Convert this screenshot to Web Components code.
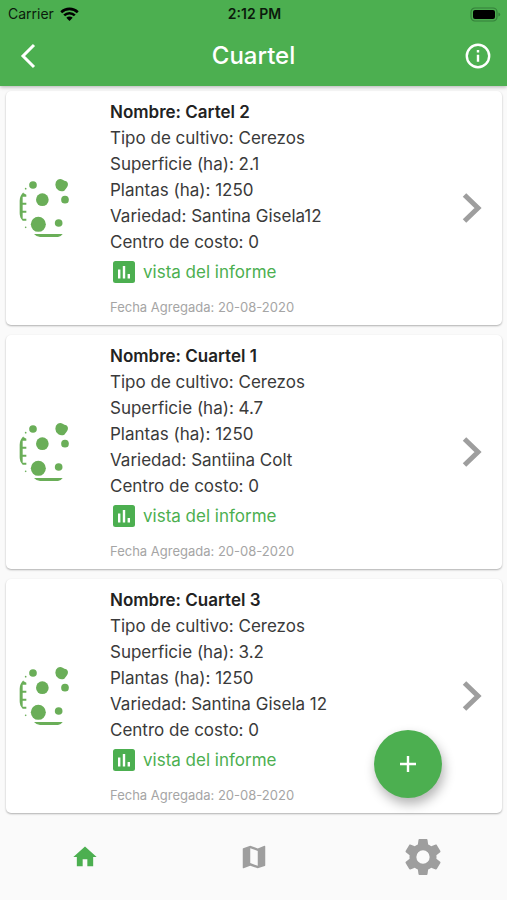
<!DOCTYPE html>
<html lang="es">
<head>
<meta charset="utf-8">
<meta name="viewport" content="width=device-width, initial-scale=1">
<title>Cuartel</title>
<style>
    body {
        margin: 0;
        background: #fafafa;
        font-family: Inter, "Liberation Sans", sans-serif;
    }
</style>
</head>
<body>
<cuartel-app></cuartel-app>

<script>
class StatusBar extends HTMLElement {
    constructor() {
        super();
        this.attachShadow({ mode: "open" });
        this.shadowRoot.innerHTML = `
            <style>
                :host {
                    display: grid;
                    grid-template-columns: 1fr auto 1fr;
                    align-items: center;
                    height: 28px;
                    padding: 0 6px 0 8px;
                    font-size: 14px;
                    line-height: 20px;
                    color: #0b1a0c;
                }
                .carrier {
                    display: flex;
                    align-items: center;
                    gap: 6px;
                }
                .time { font-weight: 600; }
                .battery { justify-self: end; }
                svg { display: block; }
            </style>
            <div class="carrier">
                <span>Carrier</span>
                <svg width="19" height="14" viewBox="0 0 19 14" fill="none" stroke="#000" stroke-width="2.6" aria-hidden="true">
                    <path d="M1.2 5.2a12 12 0 0 1 16.6 0"/>
                    <path d="M4.2 8.4a7.6 7.6 0 0 1 10.6 0"/>
                    <path d="M9.5 14 6.3 10.7a4.6 4.6 0 0 1 6.4 0z" fill="#000" stroke="none"/>
                </svg>
            </div>
            <span class="time">2:12 PM</span>
            <svg class="battery" width="31" height="15" viewBox="0 0 31 15" aria-hidden="true">
                <rect x="1" y="1" width="26" height="13" rx="4" fill="none" stroke="#34803a" stroke-width="1.2"/>
                <rect x="3" y="3" width="22" height="9" rx="2" fill="#000"/>
                <path d="M28.4 5.4q1.8.6 1.8 2.1t-1.8 2.1z" fill="#34803a"/>
            </svg>
        `;
    }
}

class AppBar extends HTMLElement {
    constructor() {
        super();
        this.attachShadow({ mode: "open" });
        this.shadowRoot.innerHTML = `
            <style>
                :host {
                    display: block;
                    position: relative;
                    z-index: 1;
                    background: #4caf50;
                    box-shadow: 0 1px 4px rgba(0,0,0,0.3);
                }
                .bar {
                    display: flex;
                    align-items: center;
                    justify-content: space-between;
                    height: 58px;
                    padding: 0 8px 2px;
                    box-sizing: border-box;
                    color: #fff;
                }
                h1 {
                    margin: 0;
                    font-size: 24px;
                    line-height: 32px;
                    font-weight: 500;
                }
                button {
                    display: grid;
                    place-items: center;
                    width: 43px;
                    height: 44px;
                    padding: 0;
                    border: 0;
                    background: none;
                    color: inherit;
                }
            </style>
            <status-bar></status-bar>
            <div class="bar">
                <button type="button" aria-label="Volver">
                    <svg width="20" height="26" viewBox="0 0 20 26" fill="none" stroke="currentColor" stroke-width="3" aria-hidden="true">
                        <path d="M14 2 3 13l11 11"/>
                    </svg>
                </button>
                <h1><slot></slot></h1>
                <button type="button" aria-label="Información">
                    <svg width="26" height="26" viewBox="0 0 26 26" fill="none" stroke="currentColor" stroke-width="2.4" aria-hidden="true">
                        <circle cx="13" cy="13" r="11.2"/>
                        <path d="M13 11.8v7M13 7v2.4"/>
                    </svg>
                </button>
            </div>
        `;
    }
}

class CuartelCard extends HTMLElement {
    constructor() {
        super();
        this.attachShadow({ mode: "open" });
        this.shadowRoot.innerHTML = `
            <style>
                :host {
                    display: grid;
                    grid-template-columns: 78px 1fr auto;
                    align-items: center;
                    column-gap: 26px;
                    padding: 8px 10px 8px 0;
                    border-radius: 5px;
                    background: #fff;
                    box-shadow: 0 1px 2px rgba(0,0,0,0.3);
                }
                .crop { justify-self: center; }
                svg { display: block; }
                .details {
                    font-size: 17px;
                    line-height: 26px;
                    color: #3a3a3a;
                }
                .report {
                    display: flex;
                    align-items: center;
                    gap: 8px;
                    margin: 4px 0 0 3px;
                    color: #4caf50;
                    text-decoration: none;
                }
                .date {
                    margin: 12px 0 0;
                    font-size: 13px;
                    line-height: 20px;
                    color: #a5a5a5;
                }
                .open {
                    display: grid;
                    place-items: center;
                    width: 40px;
                    height: 48px;
                    padding: 0;
                    border: 0;
                    background: none;
                    color: #9e9e9e;
                }
            </style>
            <svg class="crop" width="54" height="62" viewBox="54 54 162 186" fill="#6aae58" aria-hidden="true">
                <circle cx="99" cy="78" r="11.5"/>
                <path d="M173 62q8-4 15 0 5 3 11 5 7 5 4 14-4 8-10 14-9 4-18-1-9-7-9-17 0-11 7-15z"/>
                <circle cx="127" cy="122" r="19"/>
                <circle cx="195" cy="122" r="11.5"/>
                <circle cx="115" cy="196" r="22.5"/>
                <circle cx="176" cy="192" r="11.5"/>
                <path d="M102 225h86q-6 9-14 9h-54q-10 0-18-9z"/>
                <path d="M70 102 79 107v6H68v18h11v6H68v18h11v6H68v18h11v6H68q-9-8-9-22v-38q0-14 11-25z"/>
                <circle cx="77" cy="89" r="2.5"/>
                <circle cx="77" cy="205" r="2.5"/>
            </svg>
            <div class="details">
                <slot></slot>
                <a class="report" href="#informe">
                    <svg width="22" height="22" viewBox="0 0 22 22" aria-hidden="true">
                        <rect width="22" height="22" rx="2.5" fill="currentColor"/>
                        <path d="M6.2 8.5v9M11 5v12.5M15.8 13v4.5" stroke="#fff" stroke-width="2.4"/>
                    </svg>
                    vista del informe
                </a>
                <p class="date"><slot name="date"></slot></p>
            </div>
            <button class="open" type="button" aria-label="Abrir cuartel">
                <svg width="22" height="32" viewBox="0 0 22 32" fill="none" stroke="currentColor" stroke-width="5" aria-hidden="true">
                    <path d="M3.5 3 17 16 3.5 29"/>
                </svg>
            </button>
        `;
    }
}

class CuartelList extends HTMLElement {
    constructor() {
        super();
        this.attachShadow({ mode: "open" });
        const cuarteles = [
            { nombre: "Cartel 2", superficie: "2.1", variedad: "Santina Gisela12" },
            { nombre: "Cuartel 1", superficie: "4.7", variedad: "Santiina Colt" },
            { nombre: "Cuartel 3", superficie: "3.2", variedad: "Santina Gisela 12" }
        ];
        this.shadowRoot.innerHTML = `
            <style>
                :host {
                    display: flex;
                    flex-direction: column;
                    gap: 10px;
                    padding: 5px 5px 4px 6px;
                }
                .nombre {
                    font-weight: 600;
                    color: #222;
                }
            </style>
            ${cuarteles.map(c => `
                <cuartel-card>
                    <div class="nombre">Nombre: ${c.nombre}</div>
                    <div>Tipo de cultivo: Cerezos</div>
                    <div>Superficie (ha): ${c.superficie}</div>
                    <div>Plantas (ha): 1250</div>
                    <div>Variedad: ${c.variedad}</div>
                    <div>Centro de costo: 0</div>
                    <span slot="date">Fecha Agregada: 20-08-2020</span>
                </cuartel-card>
            `).join("")}
        `;
    }
}

class AddButton extends HTMLElement {
    constructor() {
        super();
        this.attachShadow({ mode: "open" });
        this.shadowRoot.innerHTML = `
            <style>
                :host {
                    position: fixed;
                    right: 65px;
                    bottom: 102px;
                    z-index: 2;
                }
                button {
                    display: grid;
                    place-items: center;
                    width: 68px;
                    height: 68px;
                    padding: 0;
                    border: 0;
                    border-radius: 50%;
                    background: #4caf50;
                    color: #fff;
                    box-shadow: 2px 6px 12px rgba(0,0,0,0.3);
                }
            </style>
            <button type="button" aria-label="Agregar cuartel">
                <svg width="18" height="18" viewBox="0 0 18 18" stroke="currentColor" stroke-width="2.4" aria-hidden="true">
                    <path d="M9 1v16M1 9h16"/>
                </svg>
            </button>
        `;
    }
}

class BottomNav extends HTMLElement {
    constructor() {
        super();
        this.attachShadow({ mode: "open" });
        this.shadowRoot.innerHTML = `
            <style>
                :host { display: block; }
                nav {
                    display: grid;
                    grid-template-columns: repeat(3, 1fr);
                    height: 82px;
                    box-sizing: border-box;
                    padding-bottom: 4px;
                    background: #fafafa;
                }
                a {
                    display: grid;
                    place-items: center;
                    color: #9e9e9e;
                }
                a[aria-current] { color: #4caf50; }
            </style>
            <nav>
                <a href="#inicio" aria-label="Inicio" aria-current="page">
                    <svg width="28" height="28" viewBox="0 0 24 24" fill="currentColor" aria-hidden="true">
                        <path d="M10 20v-6h4v6h5v-8h3L12 3 2 12h3v8z"/>
                    </svg>
                </a>
                <a href="#mapa" aria-label="Mapa">
                    <svg width="30" height="30" viewBox="0 0 24 24" fill="currentColor" aria-hidden="true">
                        <path d="M20.5 3l-.16.03L15 5.1 9 3 3.36 4.9c-.21.07-.36.25-.36.48V20.5c0 .28.22.5.5.5l.16-.03L9 18.9l6 2.1 5.64-1.9c.21-.07.36-.25.36-.48V3.5c0-.28-.22-.5-.5-.5zM15 19l-6-2.11V5l6 2.11V19z"/>
                    </svg>
                </a>
                <a href="#ajustes" aria-label="Ajustes">
                    <svg width="36" height="36" viewBox="2 2 20 20" fill="currentColor" aria-hidden="true">
                        <path d="M19.43 12.98c.04-.32.07-.64.07-.98s-.03-.66-.07-.98l2.11-1.65c.19-.15.24-.42.12-.64l-2-3.46c-.12-.22-.39-.3-.61-.22l-2.49 1c-.52-.4-1.08-.73-1.69-.98l-.38-2.65C14.46 2.18 14.25 2 14 2h-4c-.25 0-.46.18-.49.42l-.38 2.65c-.61.25-1.17.59-1.69.98l-2.49-1c-.23-.09-.49 0-.61.22l-2 3.46c-.13.22-.07.49.12.64l2.11 1.65c-.04.32-.07.65-.07.98s.03.66.07.98l-2.11 1.65c-.19.15-.24.42-.12.64l2 3.46c.12.22.39.3.61.22l2.49-1c.52.4 1.08.73 1.69.98l.38 2.65c.03.24.24.42.49.42h4c.25 0 .46-.18.49-.42l.38-2.65c.61-.25 1.17-.59 1.69-.98l2.49 1c.23.09.49 0 .61-.22l2-3.46c.12-.22.07-.49-.12-.64l-2.11-1.65zM12 15.7a3.7 3.7 0 1 1 0-7.4 3.7 3.7 0 0 1 0 7.4z"/>
                    </svg>
                </a>
            </nav>
        `;
    }
}

class CuartelApp extends HTMLElement {
    constructor() {
        super();
        this.attachShadow({ mode: "open" });
        this.shadowRoot.innerHTML = `
            <style>
                :host {
                    display: flex;
                    flex-direction: column;
                    height: 100vh;
                }
                main {
                    flex: 1;
                    min-height: 0;
                    overflow-y: auto;
                }
            </style>
            <app-bar>Cuartel</app-bar>
            <main><cuartel-list></cuartel-list></main>
            <add-button></add-button>
            <bottom-nav></bottom-nav>
        `;
    }
}

customElements.define("status-bar", StatusBar);
customElements.define("app-bar", AppBar);
customElements.define("cuartel-card", CuartelCard);
customElements.define("cuartel-list", CuartelList);
customElements.define("add-button", AddButton);
customElements.define("bottom-nav", BottomNav);
customElements.define("cuartel-app", CuartelApp);
</script>
</body>
</html>
